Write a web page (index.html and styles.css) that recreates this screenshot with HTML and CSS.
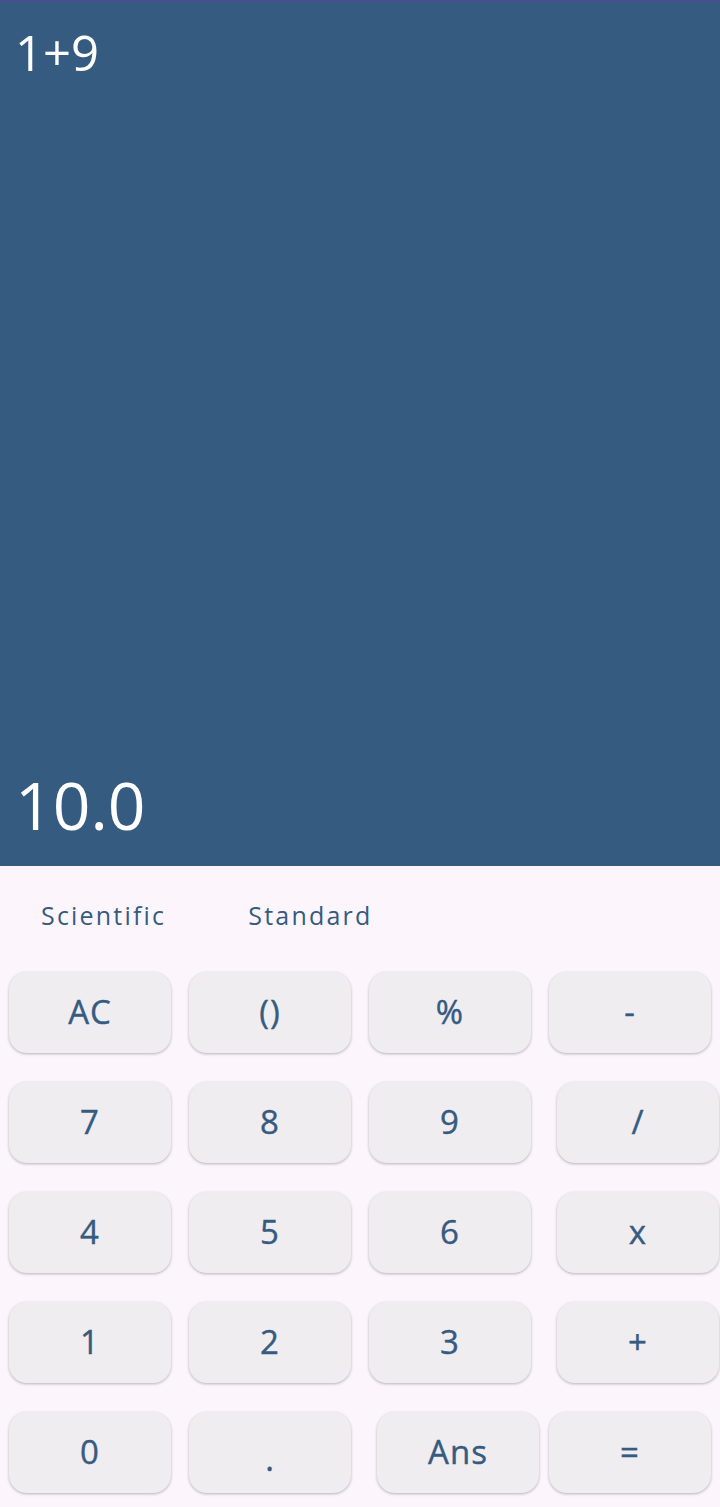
FILE: index.html
```html
<!DOCTYPE html>
<html>
<head>
<meta charset="utf-8">
<link rel="stylesheet" href="styles.css">
</head>
<body>
<div class="app">
  <div class="display">
    <div class="expr">1+9</div>
    <div class="result">10.0</div>
  </div>
  <div class="tabs">
    <span class="tab tab-sci">Scientific</span>
    <span class="tab tab-std">Standard</span>
  </div>
  <div class="keys">
    <div class="row">
      <div class="key">AC</div>
      <div class="key">()</div>
      <div class="key">%</div>
      <div class="key">-</div>
    </div>
    <div class="row">
      <div class="key">7</div>
      <div class="key">8</div>
      <div class="key">9</div>
      <div class="key key-shift">/</div>
    </div>
    <div class="row">
      <div class="key">4</div>
      <div class="key">5</div>
      <div class="key">6</div>
      <div class="key key-shift">x</div>
    </div>
    <div class="row">
      <div class="key">1</div>
      <div class="key">2</div>
      <div class="key">3</div>
      <div class="key key-shift">+</div>
    </div>
    <div class="row">
      <div class="key">0</div>
      <div class="key key-dot">.</div>
      <div class="key key-shift">Ans</div>
      <div class="key key-tight">=</div>
    </div>
  </div>
</div>
</body>
</html>
```

FILE: styles.css
```css
* { box-sizing: border-box; }
html, body {
  margin: 0;
  padding: 0;
  background: #fcf6fc;
  font-family: "Open Sans", "DejaVu Sans", sans-serif;
}
.app {
  width: 720px;
  height: 1507px;
  overflow: hidden;
  display: flex;
  flex-direction: column;
}
.display {
  height: 866px;
  background: #365b80;
  border-top: 2px solid #4b4d92;
  color: #ffffff;
  display: flex;
  flex-direction: column;
  justify-content: space-between;
  padding: 18px 0 20px 15px;
}
.expr {
  font-size: 49px;
  line-height: 64px;
}
.result {
  font-size: 66px;
  line-height: 84px;
}
.tabs {
  height: 106px;
  display: flex;
  align-items: center;
  padding-left: 41px;
  color: #365b80;
  font-size: 25px;
  letter-spacing: 2.2px;
  padding-bottom: 8px;
}
.tab-std {
  margin-left: 82px;
}
.keys {
  display: flex;
  flex-direction: column;
  gap: 29px;
  padding-left: 9px;
}
.row {
  display: flex;
  gap: 18px;
}
.key {
  width: 162px;
  height: 81px;
  border-radius: 18px;
  background: #efedf0;
  box-shadow: 0 1px 3px rgba(0, 0, 0, 0.28);
  color: #365b80;
  font-size: 33px;
  letter-spacing: 1px;
  -webkit-text-stroke: 0.4px #365b80;
  display: flex;
  align-items: center;
  justify-content: center;
  padding-bottom: 2px;
}
.key-shift {
  margin-left: 8px;
}
.key-tight {
  margin-left: -8px;
}
.key-dot {
  padding-top: 14px;
}
```
